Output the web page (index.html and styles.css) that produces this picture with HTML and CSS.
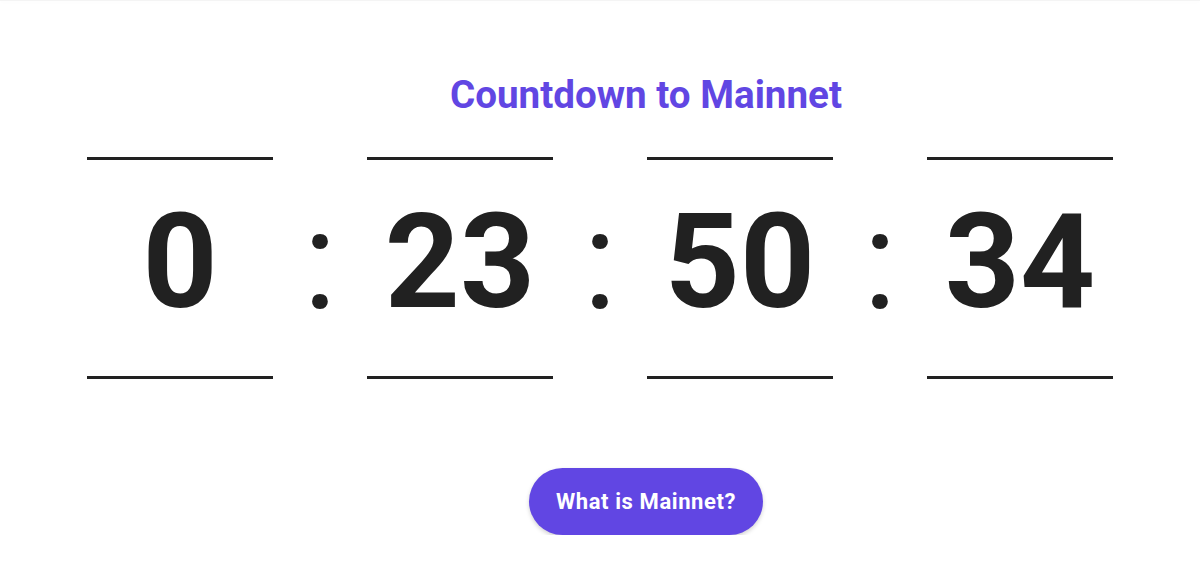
FILE: index.html
```html
<!DOCTYPE html>
<html lang="en">
<head>
    <meta charset="UTF-8">
    <meta name="viewport" content="width=device-width, initial-scale=1.0">
    <title>Countdown to Mainnet</title>
    <link rel="stylesheet" href="styles.css">
</head>
<body>
    <div class="topbar"></div>
    <main class="countdown">
        <h1 class="countdown-title">Countdown to Mainnet</h1>

        <div class="timer">
            <div class="unit"><span class="value" id="days">0</span></div>
            <span class="sep">:</span>
            <div class="unit"><span class="value" id="hours">23</span></div>
            <span class="sep">:</span>
            <div class="unit"><span class="value" id="minutes">50</span></div>
            <span class="sep">:</span>
            <div class="unit"><span class="value" id="seconds">34</span></div>
        </div>

        <div class="actions">
            <a class="btn" href="#">What is Mainnet?</a>
        </div>
    </main>
</body>
</html>
```

FILE: styles.css
```css
* {
    box-sizing: border-box;
}
body {
    margin: 0;
    padding: 0;
    font-family: Roboto, "Liberation Sans", Arial, sans-serif;
    background-color: #fff;
    color: #212121;
}
.topbar {
    height: 1px;
    background-color: #f4f4f4;
    box-shadow: 0 0 6px rgba(0, 0, 0, 0.06);
}
.countdown {
    display: flex;
    flex-direction: column;
    align-items: center;
}
.countdown-title {
    margin: 68px 0 0 92px;
    font-size: 38.6px;
    line-height: 52px;
    font-weight: 700;
    color: #6146e3;
}
.timer {
    display: flex;
    align-items: center;
    margin-top: 36px;
}
.unit {
    width: 186px;
    padding: 37px 0 48px;
    border-top: 3px solid #212121;
    border-bottom: 3px solid #212121;
    text-align: center;
}
.value {
    display: block;
    font-size: 131px;
    line-height: 131px;
    font-weight: 700;
    color: #212121;
}
.sep {
    width: 94px;
    padding-bottom: 16px;
    text-align: center;
    font-size: 140px;
    line-height: 140px;
    font-weight: 400;
    color: #212121;
}
.actions {
    margin: 89px 0 0 92px;
}
.btn {
    display: inline-block;
    padding: 0 27px;
    height: 67px;
    line-height: 67px;
    border-radius: 34px;
    background-color: #6146e3;
    color: #fff;
    font-size: 22px;
    font-weight: 700;
    letter-spacing: 0.6px;
    text-decoration: none;
    box-shadow: 0 2px 4px rgba(0, 0, 0, 0.18);
}
```
